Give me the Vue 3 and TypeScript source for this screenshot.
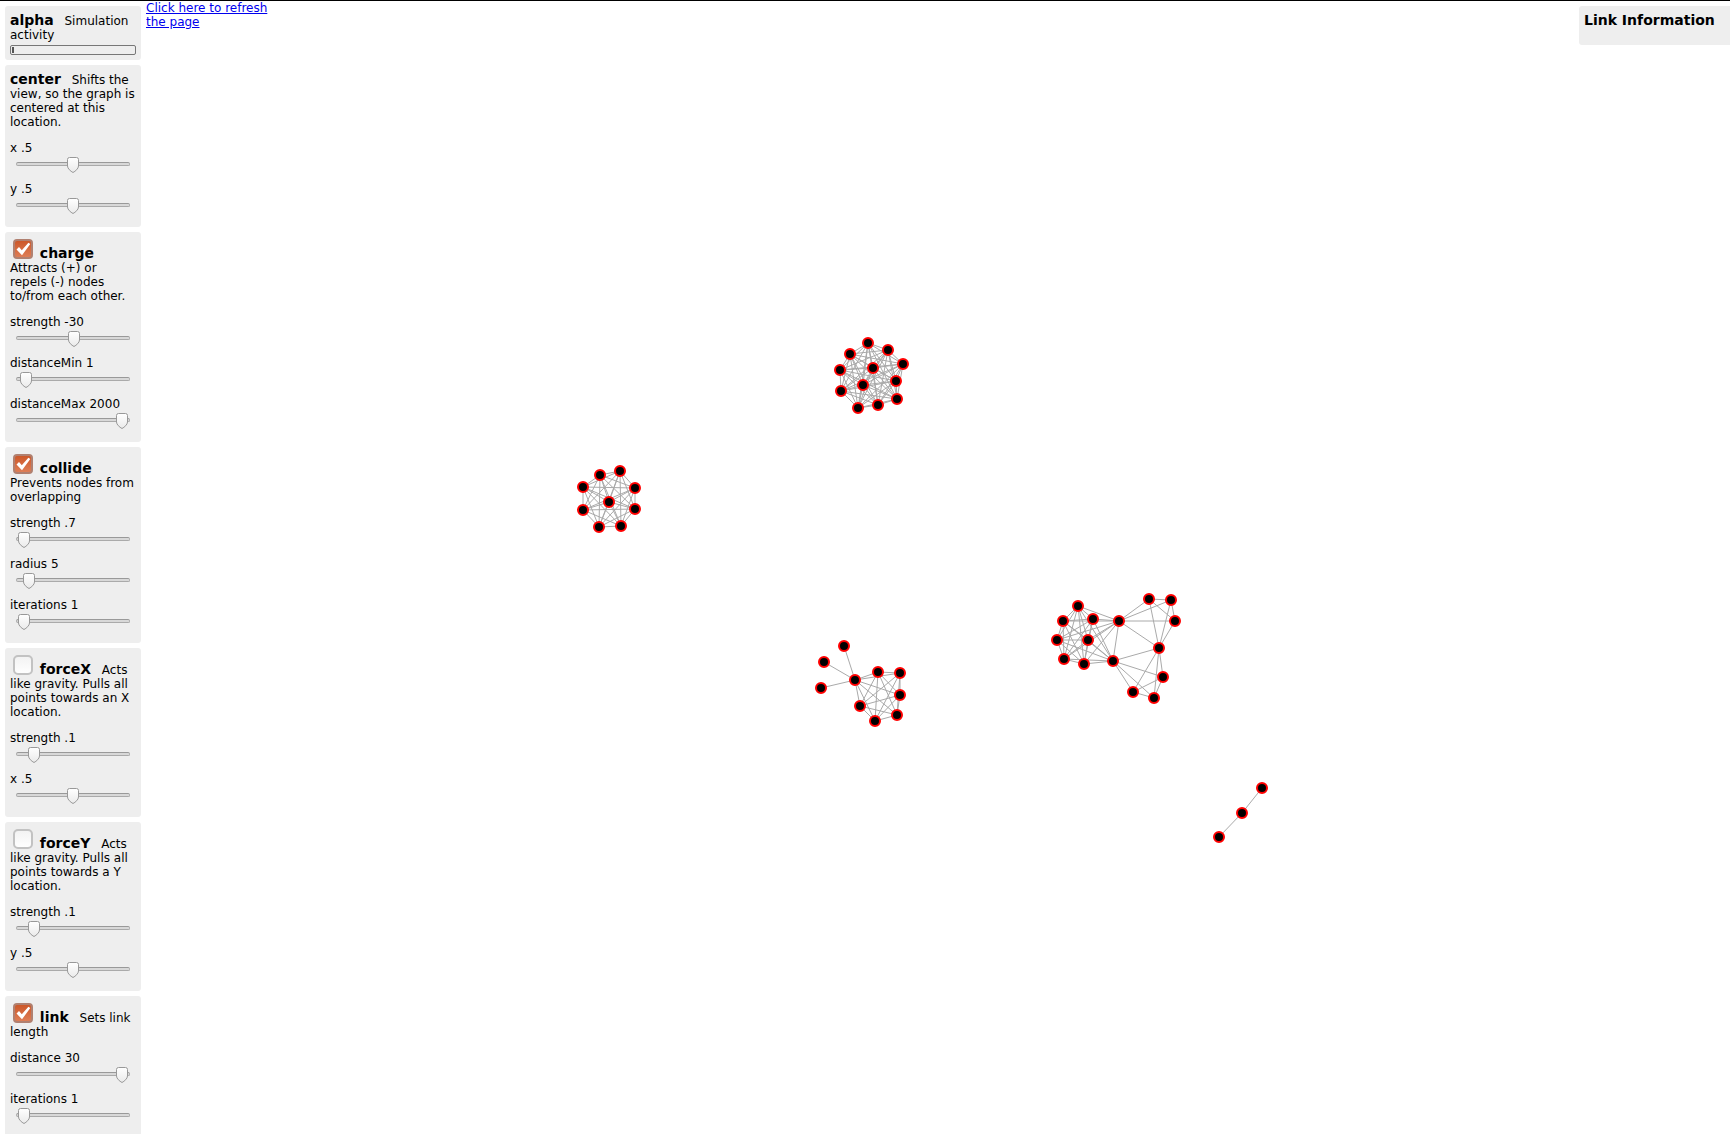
<script setup lang="ts">
import { reactive } from 'vue'

interface Slider {
  name: string
  shown: string
  min: number
  max: number
  value: number
}

interface Force {
  id: string
  about: string
  enabled?: boolean
  sliders: Slider[]
}

type Point = [number, number]

const forces = reactive<Force[]>([
  {
    id: 'center',
    about: 'Shifts the view, so the graph is centered at this location.',
    sliders: [
      { name: 'x', shown: '.5', min: 0, max: 1, value: 0.5 },
      { name: 'y', shown: '.5', min: 0, max: 1, value: 0.5 },
    ],
  },
  {
    id: 'charge',
    about: 'Attracts (+) or repels (-) nodes to/from each other.',
    enabled: true,
    sliders: [
      { name: 'strength', shown: '-30', min: -200, max: 133, value: -30 },
      { name: 'distanceMin', shown: '1', min: 0, max: 50, value: 1 },
      { name: 'distanceMax', shown: '2000', min: 0, max: 2000, value: 2000 },
    ],
  },
  {
    id: 'collide',
    about: 'Prevents nodes from overlapping',
    enabled: true,
    sliders: [
      { name: 'strength', shown: '.7', min: 0.7, max: 2, value: 0.7 },
      { name: 'radius', shown: '5', min: 0, max: 100, value: 5 },
      { name: 'iterations', shown: '1', min: 1, max: 10, value: 1 },
    ],
  },
  {
    id: 'forceX',
    about: 'Acts like gravity. Pulls all points towards an X location.',
    enabled: false,
    sliders: [
      { name: 'strength', shown: '.1', min: 0, max: 1, value: 0.1 },
      { name: 'x', shown: '.5', min: 0, max: 1, value: 0.5 },
    ],
  },
  {
    id: 'forceY',
    about: 'Acts like gravity. Pulls all points towards a Y location.',
    enabled: false,
    sliders: [
      { name: 'strength', shown: '.1', min: 0, max: 1, value: 0.1 },
      { name: 'y', shown: '.5', min: 0, max: 1, value: 0.5 },
    ],
  },
  {
    id: 'link',
    about: 'Sets link length',
    enabled: true,
    sliders: [
      { name: 'distance', shown: '30', min: 0, max: 30, value: 30 },
      { name: 'iterations', shown: '1', min: 1, max: 10, value: 1 },
    ],
  },
])

const alpha = 1

// Every member of a clique is linked to every other member.
const hubA: Point = [1119, 621]
const hubB: Point = [1113, 661]
const hubC: Point = [1159, 648]
const hubD: Point = [855, 680]

const cliques: Point[][] = [
  [[868, 343], [888, 350], [903, 364], [896, 381], [897, 399], [878, 405],
    [858, 408], [841, 391], [840, 370], [850, 354], [873, 368], [863, 385]],
  [[600, 475], [620, 471], [635, 488], [635, 509], [621, 526], [599, 527],
    [583, 510], [583, 487], [609, 502]],
  [hubD, [878, 672], [900, 673], [900, 695], [897, 715], [875, 721], [860, 706]],
  [hubA, hubB, [1078, 606], [1063, 621], [1093, 619], [1057, 640], [1088, 640],
    [1064, 659], [1084, 664]],
  [hubA, hubC, [1149, 599], [1171, 600], [1175, 621]],
  [hubB, hubC, [1163, 677], [1133, 692], [1154, 698]],
  [hubD, [844, 646]],
  [hubD, [824, 662]],
  [hubD, [821, 688]],
]

const chain: Point[] = [[1262, 788], [1242, 813], [1219, 837]]

const links: [Point, Point][] = []
for (const clique of cliques) {
  clique.forEach((a, i) => clique.slice(i + 1).forEach((b) => links.push([a, b])))
}
chain.slice(1).forEach((p, i) => links.push([chain[i], p]))

const nodes: Point[] = [...new Set([...cliques.flat(), ...chain])]
</script>

<template>
  <div class="page">
    <svg class="graph" role="img" aria-label="Force directed graph">
      <g class="links">
        <line v-for="([a, b], i) in links" :key="i" :x1="a[0]" :y1="a[1]" :x2="b[0]" :y2="b[1]" />
      </g>
      <g class="nodes">
        <circle v-for="(n, i) in nodes" :key="i" :cx="n[0]" :cy="n[1]" r="5" />
      </g>
    </svg>

    <aside class="controls">
      <section class="force alpha">
        <p class="about plain"><span class="title">alpha</span> Simulation activity</p>
        <div class="meter" role="progressbar" aria-label="Simulation activity" :aria-valuenow="alpha">
          <div class="level" :style="{ width: alpha + '%' }"></div>
        </div>
      </section>

      <section v-for="force in forces" :key="force.id" class="force">
        <p class="about" :class="{ plain: force.enabled === undefined }">
          <template v-if="force.enabled !== undefined">
            <input :id="force.id" v-model="force.enabled" class="toggle" type="checkbox" />
            {{ ' ' }}
            <label class="title" :for="force.id">{{ force.id }}</label>
          </template>
          <span v-else class="title">{{ force.id }}</span>
          {{ force.about }}
        </p>
        <label v-for="slider in force.sliders" :key="slider.name" class="row">
          {{ slider.name }} {{ slider.shown }}
          <input v-model.number="slider.value" class="slider" type="range" :min="slider.min" :max="slider.max" step="any" />
        </label>
      </section>
    </aside>

    <a class="refresh" href="#">Click here to refresh the page</a>

    <aside class="info">
      <p class="about plain"><span class="title">Link Information</span></p>
    </aside>
  </div>
</template>

<style>
body {
  margin: 0;
  background: #fff;
}
</style>

<style scoped>
.page {
  position: relative;
  display: flex;
  align-items: flex-start;
  gap: 5px;
  box-sizing: border-box;
  height: 100vh;
  overflow: hidden;
  padding-left: 5px;
  border-top: 1px solid #000;
  color: #000;
  font: 12px/14px "DejaVu Sans", sans-serif;
}

.graph {
  position: absolute;
  top: -1px;
  left: 0;
  width: 100%;
  height: 100%;
  pointer-events: none;
}

.links line {
  stroke: #aaa;
  stroke-width: 1px;
}

.nodes circle {
  fill: #000;
  stroke: #f00;
  stroke-width: 2px;
}

.controls {
  display: flex;
  flex: none;
  flex-direction: column;
  gap: 5px;
  width: 136px;
  padding-top: 5px;
}

.force {
  padding: 5px 5px 4px;
  border-radius: 3px;
  background: #eee;
}

.alpha {
  padding-bottom: 5px;
}

.about {
  margin: 0 0 12px;
}

.plain {
  padding-top: 2px;
}

.alpha .about {
  margin-bottom: 3px;
}

.title {
  margin-right: 7px;
  font-size: 14px;
  font-weight: bold;
  line-height: 14px;
}

.meter {
  box-sizing: border-box;
  height: 10px;
  padding: 1px;
  border: 1px solid #777;
  border-radius: 2px;
}

.level {
  min-width: 2px;
  height: 6px;
  background: #555;
}

.toggle {
  appearance: none;
  width: 20px;
  height: 20px;
  margin: 2px 3px 0;
  border: 0;
  vertical-align: -1px;
  background: url("data:image/svg+xml,%3Csvg xmlns='http://www.w3.org/2000/svg' viewBox='0 0 20 20'%3E%3ClinearGradient id='g' x2='0' y2='1'%3E%3Cstop stop-color='%23f2f2f2'/%3E%3Cstop offset='1' stop-color='%23fff'/%3E%3C/linearGradient%3E%3Crect x='1' y='1' width='18' height='18' rx='4' fill='url(%23g)' stroke='%23c2c2c2' stroke-width='2'/%3E%3C/svg%3E");
}

.toggle:checked {
  background: url("data:image/svg+xml,%3Csvg xmlns='http://www.w3.org/2000/svg' viewBox='0 0 20 20'%3E%3ClinearGradient id='g' x2='0' y2='1'%3E%3Cstop stop-color='%23cb5526'/%3E%3Cstop offset='1' stop-color='%23df8059'/%3E%3C/linearGradient%3E%3Crect x='1' y='1' width='18' height='18' rx='3' fill='url(%23g)' stroke='%23b08070' stroke-width='2'/%3E%3Cpath d='M3.500 10.500 6 8 8.800 11.300 15.400 3.700 17.300 5 9 16.300Z' fill='%23fff'/%3E%3C/svg%3E");
}

.row {
  display: block;
  margin-bottom: 9px;
}

.slider {
  appearance: none;
  display: block;
  width: 114px;
  height: 18px;
  margin: 0 6px;
  background: transparent;
}

.slider::-webkit-slider-runnable-track {
  box-sizing: border-box;
  height: 4px;
  border: 1px solid #aaa;
  border-top-color: #999;
  border-radius: 2px;
  background: #d8d8d8;
}

.slider::-webkit-slider-thumb {
  appearance: none;
  width: 14px;
  height: 16px;
  margin-top: -6px;
  background: url("data:image/svg+xml,%3Csvg xmlns='http://www.w3.org/2000/svg' viewBox='0 0 14 16'%3E%3ClinearGradient id='g' x2='0' y2='1'%3E%3Cstop stop-color='%23fff'/%3E%3Cstop offset='1' stop-color='%23eaeaea'/%3E%3C/linearGradient%3E%3Cpath d='M3.500 .5H10.500Q12.500 .5 12.500 2.500V9C12.500 11.500 9.500 14.200 7 15.500C4.500 14.200 1.500 11.500 1.500 9V2.500Q1.500 .5 3.500 .5Z' fill='url(%23g)' stroke='%23989898'/%3E%3C/svg%3E");
}

.refresh {
  flex: none;
  width: 136px;
  color: #00e;
}

.info {
  box-sizing: border-box;
  width: 151px;
  height: 39px;
  margin: 5px 0 0 auto;
  padding: 5px;
  border-radius: 3px 0 0 3px;
  background: #eee;
  white-space: nowrap;
}
</style>
